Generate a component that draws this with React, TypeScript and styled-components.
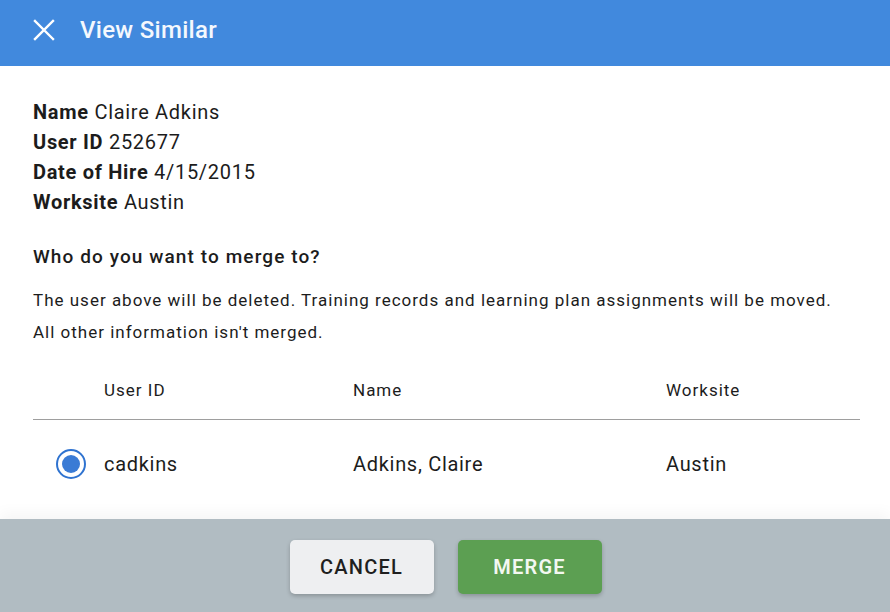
import React from 'react'
import styled, { createGlobalStyle } from 'styled-components'

const GlobalStyle = createGlobalStyle`
  html, body {
    margin: 0;
    padding: 0;
    height: 100%;
  }
  body {
    font-family: Roboto, "Liberation Sans", sans-serif;
    color: #1c1c1c;
    background: #ffffff;
  }
  #root {
    height: 100%;
  }
`

const columns = '71px 249px 313px 1fr'

const rows = [{ id: 'cadkins', name: 'Adkins, Claire', worksite: 'Austin' }]

const App = () => {
  return (
    <>
      <GlobalStyle />
      <Page>
        <Header>
          <CloseButton aria-label="Close">
            <svg width="22" height="22" viewBox="0 0 22 22">
              <path d="M2 2 L20 20 M20 2 L2 20" stroke="#fff" strokeWidth="2.4" strokeLinecap="square" />
            </svg>
          </CloseButton>
          <Title>View Similar</Title>
        </Header>

        <Content>
          <InfoList>
            <InfoLine><b>Name</b> Claire Adkins</InfoLine>
            <InfoLine><b>User ID</b> 252677</InfoLine>
            <InfoLine><b>Date of Hire</b> 4/15/2015</InfoLine>
            <InfoLine><b>Worksite</b> Austin</InfoLine>
          </InfoList>

          <Question>Who do you want to merge to?</Question>
          <Description>
            The user above will be deleted. Training records and learning plan assignments will be moved.
            <br />
            All other information isn't merged.
          </Description>

          <Table>
            <HeadRow>
              <span />
              <HeadCell>User ID</HeadCell>
              <HeadCell>Name</HeadCell>
              <HeadCell>Worksite</HeadCell>
            </HeadRow>
            {rows.map(r => (
              <BodyRow key={r.id}>
                <RadioCell>
                  <Radio $checked />
                </RadioCell>
                <Cell>{r.id}</Cell>
                <Cell>{r.name}</Cell>
                <Cell>{r.worksite}</Cell>
              </BodyRow>
            ))}
          </Table>
        </Content>

        <Footer>
          <Button>CANCEL</Button>
          <Button $primary>MERGE</Button>
        </Footer>
      </Page>
    </>
  )
}

export default App

const Page = styled.div`
  display: flex;
  flex-direction: column;
  height: 100%;
  overflow: hidden;
`;

const Header = styled.header`
  flex: 0 0 66px;
  box-sizing: border-box;
  display: flex;
  align-items: center;
  gap: 25px;
  padding: 0 0 6px 33px;
  background: #4189dd;
`;

const CloseButton = styled.button`
  display: flex;
  padding: 0;
  margin: 0;
  border: 0;
  background: none;
  cursor: pointer;
`;

const Title = styled.h1`
  margin: 0;
  font-size: 24px;
  font-weight: 500;
  letter-spacing: 0.3px;
  color: #f4f8fd;
`;

const Content = styled.main`
  flex: 1;
  padding: 31px 30px 0 33px;
`;

const InfoList = styled.div`
  display: flex;
  flex-direction: column;
`;

const InfoLine = styled.div`
  font-size: 20px;
  line-height: 30px;
  letter-spacing: 0.7px;

  b {
    font-weight: 700;
  }
`;

const Question = styled.h2`
  margin: 25px 0 0;
  font-size: 19px;
  line-height: 30px;
  font-weight: 500;
  letter-spacing: 1.1px;
`;

const Description = styled.p`
  margin: 12px 0 0;
  font-size: 17px;
  line-height: 32px;
  letter-spacing: 1px;
`;

const Table = styled.div`
  margin-top: 12px;
`;

const HeadRow = styled.div`
  display: grid;
  grid-template-columns: ${columns};
  align-items: center;
  height: 59px;
  border-bottom: 1px solid #9e9e9e;
`;

const HeadCell = styled.span`
  font-size: 17px;
  letter-spacing: 1px;
`;

const BodyRow = styled.div`
  display: grid;
  grid-template-columns: ${columns};
  align-items: center;
  height: 88px;
`;

const RadioCell = styled.div`
  display: flex;
  justify-content: center;
  padding-left: 4px;
`;

const Radio = styled.span<{ $checked?: boolean }>`
  box-sizing: border-box;
  width: 30px;
  height: 30px;
  border-radius: 50%;
  border: 2.5px solid #2f73d0;
  display: flex;
  align-items: center;
  justify-content: center;

  &::after {
    content: '';
    width: 18px;
    height: 18px;
    border-radius: 50%;
    background: #3a7bd5;
    display: ${p => (p.$checked ? 'block' : 'none')};
  }
`;

const Cell = styled.span`
  font-size: 20px;
  letter-spacing: 0.7px;
`;

const Footer = styled.footer`
  flex: 0 0 93px;
  display: flex;
  justify-content: center;
  align-items: flex-start;
  gap: 24px;
  padding-top: 21px;
  box-sizing: border-box;
  background: #b1bcc2;
  box-shadow: 0 -6px 14px rgba(0, 0, 0, 0.04);
`;

const Button = styled.button<{ $primary?: boolean }>`
  width: 144px;
  height: 54px;
  margin-left: ${p => (p.$primary ? '0' : '1px')};
  border: 0;
  border-radius: 5px;
  font-family: Roboto, "Liberation Sans", sans-serif;
  font-size: 20px;
  font-weight: ${p => (p.$primary ? 600 : 500)};
  letter-spacing: 1.2px;
  cursor: pointer;
  color: ${p => (p.$primary ? '#f3f8f1' : '#1f1f1f')};
  background: ${p => (p.$primary ? '#5c9f52' : '#eeeff1')};
  box-shadow: 0 2px 4px rgba(0, 0, 0, 0.22);
`;
